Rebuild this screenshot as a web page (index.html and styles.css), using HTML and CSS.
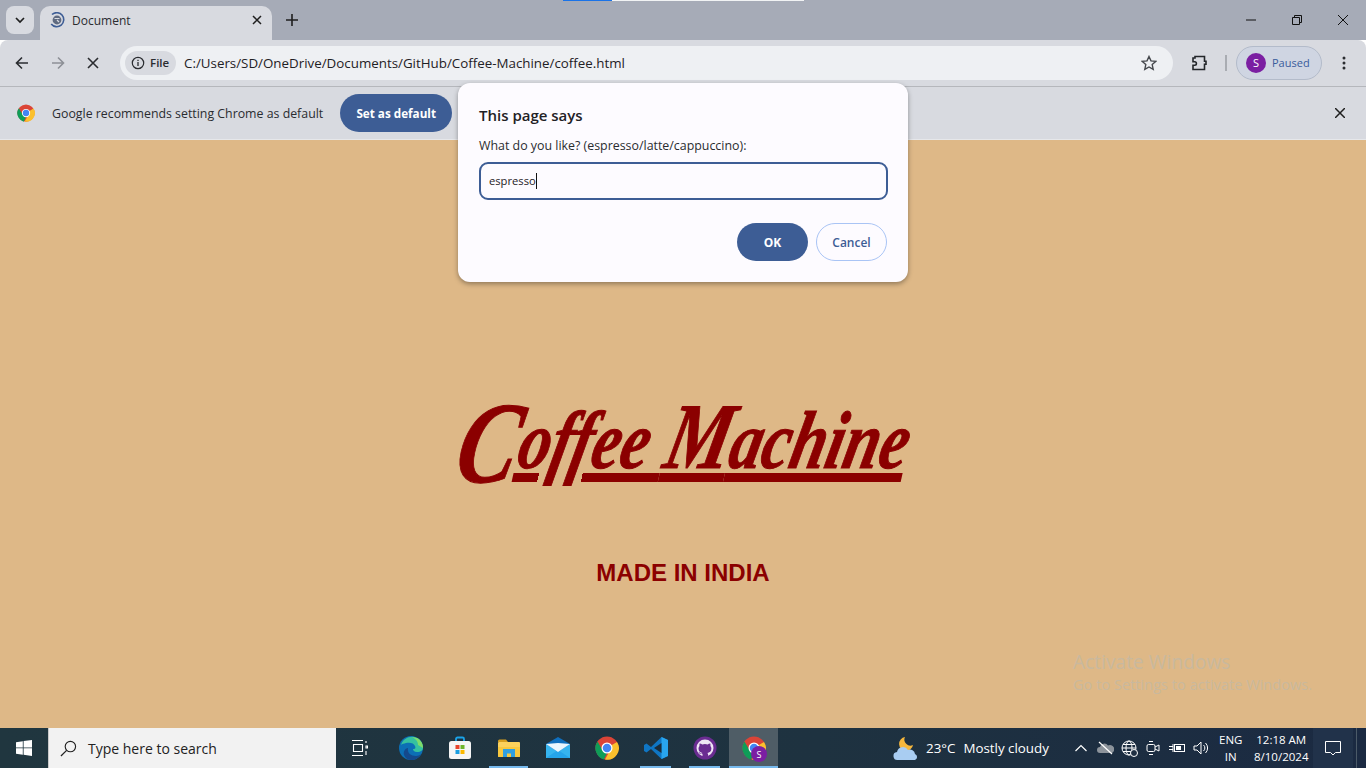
FILE: index.html

```html
<!DOCTYPE html>
<html>
  <head>
    <meta charset="utf-8">
    <title>Document</title>
    <link rel="stylesheet" href="styles.css">
  </head>
  <body>
    <div class="screen">
      <!-- tab strip -->
      <div class="tabstrip">
        <div class="load-line"><span class="load-blue"></span><span class="load-white"></span></div>
        <button class="tab-search">
          <svg width="12" height="12" viewBox="0 0 12 12"><path d="M2 4l4 4 4-4" fill="none" stroke="#1f1f1f" stroke-width="1.7"/></svg>
        </button>
        <div class="tab">
          <svg class="tab-favicon" width="16" height="16" viewBox="0 0 16 16">
            <path d="M3 2.5A7 7 0 1 1 2.2 12" fill="none" stroke="#3d5d95" stroke-width="1.6"/>
            <circle cx="8" cy="8" r="4.4" fill="#5f6a80"/>
            <path d="M5.5 6.5h5M8 8l2 2" stroke="#d8dae0" stroke-width="1.2"/>
          </svg>
          <span class="tab-title">Document</span>
          <svg class="tab-close" width="10" height="10" viewBox="0 0 10 10"><path d="M1 1l8 8M9 1l-8 8" stroke="#1f1f1f" stroke-width="1.5"/></svg>
        </div>
        <svg class="new-tab" width="12" height="12" viewBox="0 0 12 12"><path d="M6 0v12M0 6h12" stroke="#1f1f1f" stroke-width="1.6"/></svg>
        <div class="window-btns">
          <svg width="10" height="10" viewBox="0 0 10 10"><path d="M0 5h10" stroke="#111" stroke-width="1"/></svg>
          <svg width="10" height="10" viewBox="0 0 10 10"><path d="M.5 2.5h7v7h-7zM2.5 2.5v-2h7v7h-2" fill="none" stroke="#111" stroke-width="1"/></svg>
          <svg width="10" height="10" viewBox="0 0 10 10"><path d="M0 0l10 10M10 0L0 10" stroke="#111" stroke-width="1"/></svg>
        </div>
      </div>

      <!-- toolbar -->
      <div class="toolbar">
        <svg class="nav-icon" width="14" height="14" viewBox="0 0 14 14"><path d="M13 7H2M7 1.500L1.500 7 7 12.500" fill="none" stroke="#2a2c30" stroke-width="1.600"/></svg>
        <svg class="nav-icon" width="14" height="14" viewBox="0 0 14 14"><path d="M1 7h11M7 1.500L12.500 7 7 12.500" fill="none" stroke="#8d9096" stroke-width="1.600"/></svg>
        <svg class="nav-icon" width="12" height="12" viewBox="0 0 12 12"><path d="M1 1l10 10M11 1L1 11" stroke="#2a2c30" stroke-width="1.600"/></svg>
        <div class="omnibox">
          <div class="chip">
            <svg width="14" height="14" viewBox="0 0 14 14"><circle cx="7" cy="7" r="5.700" fill="none" stroke="#2a2c30" stroke-width="1.200"/><path d="M7 6v4M7 3.700v1.300" stroke="#2a2c30" stroke-width="1.300"/></svg>
            <span>File</span>
          </div>
          <span class="url">C:/Users/SD/OneDrive/Documents/GitHub/Coffee-Machine/coffee.html</span>
          <svg class="star" width="16" height="16" viewBox="0 0 16 16"><path d="M8 1.500l2 4.400 4.700.5-3.500 3.200 1 4.700L8 12l-4.200 2.300 1-4.700L1.300 6.400 6 5.900z" fill="none" stroke="#44474c" stroke-width="1.400"/></svg>
        </div>
        <svg class="puzzle" width="18" height="18" viewBox="0 0 18 18"><path d="M5 2.500h9.500v4.800h1.500v3h-1.500v5.200H3v-4.300h1.700a1.700 1.700 0 0 0 0-3.400H3V4h2z" fill="none" stroke="#23262a" stroke-width="1.600"/></svg>
        <span class="tool-sep"></span>
        <div class="profile">
          <span class="avatar">S</span>
          <span class="paused">Paused</span>
        </div>
        <svg class="menu-dots" width="4" height="14" viewBox="0 0 4 14"><circle cx="2" cy="2" r="1.500" fill="#2a2c30"/><circle cx="2" cy="7" r="1.500" fill="#2a2c30"/><circle cx="2" cy="12" r="1.500" fill="#2a2c30"/></svg>
      </div>

      <!-- default browser bar -->
      <div class="infobar">
        <svg class="chrome-logo" width="18" height="18" viewBox="0 0 48 48">
          <circle cx="24" cy="24" r="23" fill="#db4437"/>
          <path d="M4 36A23 23 0 0 1 5 11l11 19 8 4-6 13A23 23 0 0 1 4 36z" fill="#0f9d58"/>
          <path d="M44 12a23 23 0 0 1-24 35l10-18 2-10z" fill="#fbc02d"/>
          <circle cx="24" cy="24" r="11" fill="#fff"/>
          <circle cx="24" cy="24" r="8.500" fill="#4285f4"/>
        </svg>
        <span class="info-text">Google recommends setting Chrome as default</span>
        <button class="set-default">Set as default</button>
        <svg class="info-close" width="10" height="10" viewBox="0 0 10 10"><path d="M0 0l10 10M10 0L0 10" stroke="#1f1f1f" stroke-width="1.500"/></svg>
      </div>

      <!-- page -->
      <main class="page">
        <h1 class="logo"><span class="logo-c">C</span><span class="logo-line">offee <span class="logo-m">M</span>achine</span></h1>
        <h2 class="made">MADE IN INDIA</h2>
        <div class="activate">
          <div class="activate-big">Activate Windows</div>
          <div class="activate-small">Go to Settings to activate Windows.</div>
        </div>
      </main>

      <!-- taskbar -->
      <footer class="taskbar">
        <div class="start">
          <svg width="16" height="16" viewBox="0 0 16 16"><path d="M0 2.200l6.800-1v6.300H0zM7.600 1.100L16 0v7.500H7.600zM0 8.300h6.800v6.400L0 13.800zM7.600 8.300H16V16l-8.400-1.200z" fill="#fff"/></svg>
        </div>
        <div class="search">
          <svg width="17" height="17" viewBox="0 0 18 18"><circle cx="11" cy="7" r="5.500" fill="none" stroke="#222" stroke-width="1.200"/><path d="M7 11l-6 6" stroke="#222" stroke-width="1.300"/></svg>
          <span>Type here to search</span>
        </div>
        <div class="task-icons">
          <div class="task-item task-view">
            <svg width="16" height="16" viewBox="0 0 16 16"><path d="M0 .5h11M0 15.500h11M1.500 4.500h9v7h-9zM14 1v2M14 6h1.500v2H14zM14 11v4" fill="none" stroke="#fff" stroke-width="1.100"/></svg>
          </div>
          <div class="task-item">
            <svg width="24" height="24" viewBox="0 0 24 24">
              <circle cx="12" cy="12" r="12" fill="#0c6fb5"/>
              <path d="M2 9C4 2 12-1 18 2c4 2 6 6 6 10 0 2-2 4-6 4-3 0-4-2-4-3 2 0 3-1 2-3-1-3-5-4-9-3-2 .5-4 1-5 2z" fill="#35c1a0"/>
              <path d="M18 2c4 2 6 6 6 10l-5-3c0-3-1-5-6-8z" fill="#7fdc6a"/>
              <path d="M9 12c-1 5 3 8 8 8 2 0 4-1 5-2-2 4-6 6-10 6-3 0-6-2-7-5s1-7 4-7z" fill="#14498c"/>
            </svg>
          </div>
          <div class="task-item">
            <svg width="24" height="24" viewBox="0 0 24 24">
              <path d="M8 6V3a1.500 1.500 0 0 1 1.500-1.500h5A1.500 1.500 0 0 1 16 3v3" fill="none" stroke="#1aa3e8" stroke-width="1.800"/>
              <rect x="1" y="5" width="22" height="18" rx="2.500" fill="#f5f5f5"/>
              <rect x="7.500" y="9" width="4" height="4" fill="#e8432a"/>
              <rect x="12.500" y="9" width="4" height="4" fill="#6fb52c"/>
              <rect x="7.500" y="14" width="4" height="4" fill="#1a9de0"/>
              <rect x="12.500" y="14" width="4" height="4" fill="#fcb900"/>
            </svg>
          </div>
          <div class="task-item is-open">
            <svg width="24" height="24" viewBox="0 0 24 24">
              <path d="M1 5a1.500 1.500 0 0 1 1.500-1.500H9l2 2.500H1z" fill="#d79f1e"/>
              <rect x="1" y="6" width="22" height="15" rx="1" fill="#fbd15c"/>
              <path d="M1 11h22v9a1 1 0 0 1-1 1H2a1 1 0 0 1-1-1z" fill="#f8c83e"/>
              <path d="M6 21v-8h12v8h-4v-3.500h-4V21z" fill="#2f9fe0"/>
            </svg>
          </div>
          <div class="task-item">
            <svg width="24" height="24" viewBox="0 0 24 24">
              <path d="M0 8L12 1l12 7v14H0z" fill="#0f6fbe"/>
              <path d="M0 8l12 8 12-8v14H0z" fill="#36b4ef"/>
              <path d="M0 22l12-8 12 8z" fill="#22a0e8" opacity=".8"/>
              <path d="M0 8l12 8 12-8-12-1z" fill="#eaf6fd"/>
            </svg>
          </div>
          <div class="task-item">
            <svg width="24" height="24" viewBox="0 0 48 48">
              <circle cx="24" cy="24" r="23" fill="#db4437"/>
              <path d="M4 36A23 23 0 0 1 5 11l11 19 8 4-6 13A23 23 0 0 1 4 36z" fill="#0f9d58"/>
              <path d="M44 12a23 23 0 0 1-24 35l10-18 2-10z" fill="#fbc02d"/>
              <circle cx="24" cy="24" r="11" fill="#fff"/>
              <circle cx="24" cy="24" r="8.500" fill="#4285f4"/>
            </svg>
          </div>
          <div class="task-item is-open is-short">
            <svg width="24" height="24" viewBox="0 0 24 24">
              <path d="M17.500 1L24 4v16l-6.500 3L7 13l-4.500 3.500L0 15V9l2.500-1.500L7 11z" fill="#0f76c4"/>
              <path d="M17.500 1L24 4v16l-6.500 3z" fill="#29a5ee"/>
              <path d="M17.500 7v10L10 12z" fill="#1a2c3a"/>
            </svg>
          </div>
          <div class="task-item is-open is-short">
            <svg width="24" height="24" viewBox="0 0 24 24">
              <circle cx="12" cy="12" r="11.500" fill="#6a2c91"/>
              <circle cx="12" cy="12" r="8.500" fill="#efe6f5"/>
              <path d="M9.500 21v-3c-3 .5-3.500-1-4-2 1 0 1.500 1 2 1.500 1 .5 1.500 0 2-.5-2-.5-4-1.500-4-4.500 0-1 .3-1.800 1-2.500-.2-.8-.2-1.700.2-2.500 1 0 1.800.5 2.500 1a8 8 0 0 1 5.500 0c.7-.5 1.500-1 2.500-1 .4.800.4 1.700.2 2.500.7.700 1 1.500 1 2.500 0 3-2 4-4 4.500.5.500.7 1 .7 2v3z" fill="#6a2c91"/>
            </svg>
          </div>
          <div class="task-item is-active">
            <svg width="24" height="24" viewBox="0 0 48 48">
              <circle cx="24" cy="24" r="23" fill="#db4437"/>
              <path d="M4 36A23 23 0 0 1 5 11l11 19 8 4-6 13A23 23 0 0 1 4 36z" fill="#0f9d58"/>
              <path d="M44 12a23 23 0 0 1-24 35l10-18 2-10z" fill="#fbc02d"/>
              <circle cx="24" cy="24" r="11" fill="#fff"/>
              <circle cx="24" cy="24" r="8.500" fill="#4285f4"/>
            </svg>
            <span class="task-badge">S</span>
          </div>
        </div>
        <div class="weather">
          <svg width="26" height="26" viewBox="0 0 26 26">
            <path d="M12 2a7 7 0 1 0 8 8 6 6 0 0 1-8-8z" fill="#f6b73c"/>
            <path d="M5 25a4 4 0 0 1-1-8 6 6 0 0 1 11-2 5 5 0 0 1 7 4 3.200 3.200 0 0 1 0 6z" fill="#a9cdf2"/>
          </svg>
          <span class="temp">23°C</span>
          <span class="sky">Mostly cloudy</span>
        </div>
        <div class="tray">
          <svg width="12" height="8" viewBox="0 0 12 8"><path d="M.5 7L6 1.500 11.500 7" fill="none" stroke="#fff" stroke-width="1.200"/></svg>
          <svg width="17" height="14" viewBox="0 0 17 14"><path d="M3 12a3 3 0 0 1 0-6 4.500 4.500 0 0 1 8-1.500A3.500 3.500 0 0 1 15 12z" fill="#8c939b"/><path d="M2 1l13 12" stroke="#fff" stroke-width="1.200"/></svg>
          <svg width="17" height="17" viewBox="0 0 17 17"><circle cx="8" cy="8" r="7" fill="none" stroke="#fff" stroke-width="1"/><ellipse cx="8" cy="8" rx="3" ry="7" fill="none" stroke="#fff" stroke-width="1"/><path d="M1 8h14M2 4.500h12M2 11.500h12" stroke="#fff" stroke-width="1"/><circle cx="13" cy="13" r="3.500" fill="#1f2f42" stroke="#fff"/></svg>
          <svg width="14" height="16" viewBox="0 0 14 16"><rect x="1" y="4.500" width="8" height="7" rx="1.500" fill="none" stroke="#fff"/><path d="M9 7l4-2v6l-4-2M3 1.500h4M3 14.500h4" fill="none" stroke="#fff"/></svg>
          <svg width="16" height="12" viewBox="0 0 16 12"><rect x="5.500" y="2.500" width="10" height="7" fill="none" stroke="#fff"/><rect x="7" y="4" width="5" height="4" fill="#fff"/><path d="M0 4.500h4M0 7.500h4M4 2v8" stroke="#fff"/></svg>
          <svg width="17" height="14" viewBox="0 0 17 14"><path d="M1 5h3l4-4v12L4 9H1zM10.500 4a4 4 0 0 1 0 6M12.500 2a7 7 0 0 1 0 10" fill="none" stroke="#fff"/></svg>
        </div>
        <div class="lang"><span>ENG</span><span>IN</span></div>
        <div class="clock"><span>12:18 AM</span><span>8/10/2024</span></div>
        <div class="notify">
          <svg width="16" height="16" viewBox="0 0 16 16"><path d="M.5 1.500h15v11h-5L8 15l-2.500-2.500h-5z" fill="none" stroke="#fff" stroke-width="1"/></svg>
        </div>
        <div class="show-desktop"></div>
      </footer>

      <!-- prompt dialog, sits over the infobar and page -->
      <div class="dialog">
        <div class="dialog-title">This page says</div>
        <div class="dialog-msg">What do you like? (espresso/latte/cappuccino):</div>
        <div class="dialog-input"><span>espresso</span><i class="caret"></i></div>
        <div class="dialog-btns">
          <button class="btn-ok">OK</button>
          <button class="btn-cancel">Cancel</button>
        </div>
      </div>
    </div>
  </body>
</html>
```

FILE: styles.css

```css
* {
  box-sizing: border-box;
}

html,
body {
  margin: 0;
  height: 100%;
  overflow: hidden;
}

body {
  font-family: "Open Sans", "Noto Sans", sans-serif;
}

button {
  font-family: inherit;
  border: none;
  padding: 0;
}

.screen {
  position: relative;
  display: flex;
  flex-direction: column;
  width: 1366px;
  height: 768px;
}

/* tab strip */
.tabstrip {
  position: relative;
  display: flex;
  align-items: flex-end;
  flex: none;
  height: 40px;
  background: #a6abb7;
}

.load-line {
  position: absolute;
  top: 0;
  left: 563px;
  display: flex;
  height: 1px;
}

.load-blue {
  width: 49px;
  background: #1a73e8;
}

.load-white {
  width: 192px;
  background: #f1f3f4;
}

.tab-search {
  display: flex;
  align-items: center;
  justify-content: center;
  align-self: flex-start;
  width: 28px;
  height: 28px;
  margin: 6px 0 0 6px;
  border-radius: 8px;
  background: #d8dae0;
}

.tab {
  display: flex;
  align-items: center;
  width: 232px;
  height: 34px;
  margin-left: 6px;
  padding: 0 10px 6px 9px;
  border-radius: 10px 10px 0 0;
  background: #d8dae0;
}

.tab-favicon {
  flex: none;
  margin-right: 7px;
}

.tab-title {
  flex: 1;
  font-size: 12px;
  color: #2a2c30;
}

.tab-close {
  flex: none;
  margin-bottom: 1px;
}

.new-tab {
  align-self: flex-start;
  margin: 14px 0 0 14px;
}

.window-btns {
  display: flex;
  gap: 36px;
  align-self: flex-start;
  margin: 15px 18px 0 auto;
}

/* toolbar */
.toolbar {
  display: flex;
  align-items: center;
  flex: none;
  height: 47px;
  padding: 0 0 1px 15px;
  border-bottom: 1px solid #b5b7bc;
  background: #d8dae0;
  border-radius: 8px 8px 0 0;
}

.nav-icon {
  flex: none;
  margin-right: 22px;
}

.nav-icon:nth-child(3) {
  margin-right: 21px;
}

.omnibox {
  display: flex;
  align-items: center;
  flex: none;
  width: 1053px;
  height: 34px;
  padding: 0 16px 0 5px;
  border-radius: 17px;
  background: #eef0f3;
}

.chip {
  display: flex;
  align-items: center;
  flex: none;
  gap: 5px;
  width: 51px;
  height: 24px;
  padding-left: 6px;
  border-radius: 12px;
  background: #d8dae0;
  font-size: 11.500px;
  font-weight: 600;
  color: #2a2c30;
}

.url {
  flex: 1;
  margin-left: 8px;
  padding-top: 1px;
  font-size: 13.350px;
  color: #1f2125;
}

.star {
  flex: none;
}

.puzzle {
  flex: none;
  margin-left: 17px;
}

.tool-sep {
  flex: none;
  width: 2px;
  height: 16px;
  margin-left: 17px;
  background: #a9acb2;
}

.profile {
  display: flex;
  align-items: center;
  flex: none;
  gap: 6px;
  width: 86px;
  height: 34px;
  margin-left: 9px;
  padding-left: 9px;
  border: 1px solid #b3bbca;
  border-radius: 17px;
  background: #cfd5e2;
}

.avatar {
  display: flex;
  align-items: center;
  justify-content: center;
  width: 20px;
  height: 20px;
  border-radius: 50%;
  background: #7b1fa2;
  font-size: 11px;
  color: #fff;
}

.paused {
  font-size: 11px;
  color: #3a5c9c;
}

.menu-dots {
  flex: none;
  margin-left: 20px;
}

/* infobar */
.infobar {
  display: flex;
  align-items: center;
  flex: none;
  height: 53px;
  padding-left: 17px;
  border-bottom: 1px solid #e6e7ea;
  background: #d8dae0;
}

.chrome-logo {
  flex: none;
}

.info-text {
  margin-left: 17px;
  font-size: 12.350px;
  color: #2a2c30;
}

.set-default {
  width: 112px;
  height: 38px;
  margin-left: 17px;
  border-radius: 19px;
  background: #3d5d95;
  font-size: 11.700px;
  font-weight: 700;
  color: #fff;
}

.info-close {
  flex: none;
  margin-left: auto;
  margin-right: 21px;
}

/* page */
.page {
  position: relative;
  display: flex;
  flex-direction: column;
  align-items: center;
  flex: 1;
  background: #deb887;
}

/* no script font here, so a squeezed and slanted serif stands in for it */
.logo {
  margin: 255px 0 0;
  font-family: "Liberation Serif", serif;
  font-size: 82px;
  line-height: 92px;
  font-style: italic;
  font-weight: 700;
  color: #8b0000;
  white-space: nowrap;
  -webkit-text-stroke: 1px #8b0000;
  transform: translateX(2px) scaleX(.78) skewX(-16deg);
}

.logo-line {
  text-decoration: underline;
  text-decoration-thickness: 9px;
  text-underline-offset: 5px;
}

.logo-c {
  font-size: 116px;
  line-height: 0;
  vertical-align: -14px;
}

.logo-m {
  font-size: 94px;
  line-height: 0;
}

.made {
  margin: 72px 0 0;
  font-family: "Liberation Sans", Arial, sans-serif;
  font-size: 24px;
  line-height: 28px;
  font-weight: 700;
  color: #8b0000;
}

.activate {
  position: absolute;
  top: 510px;
  left: 1073px;
  color: #c9b89e;
}

.activate-big {
  font-size: 19.200px;
  line-height: 24px;
}

.activate-small {
  margin-top: 1px;
  font-size: 14.600px;
  line-height: 18px;
}

/* taskbar */
.taskbar {
  display: flex;
  align-items: center;
  flex: none;
  height: 40px;
  background: linear-gradient(90deg, #20363f 0%, #1e3240 60%, #1b2a42 100%);
  color: #fff;
}

.start {
  display: flex;
  align-items: center;
  justify-content: center;
  flex: none;
  width: 48px;
  height: 40px;
}

.search {
  display: flex;
  align-items: center;
  flex: none;
  gap: 11px;
  width: 288px;
  height: 40px;
  padding-left: 11px;
  background: #f2f2f2;
  border-left: 1px solid #c9c9c9;
  font-size: 14px;
  color: #222;
}

.task-icons {
  display: flex;
  flex: none;
  margin-left: 1px;
}

.task-item {
  position: relative;
  display: flex;
  align-items: center;
  justify-content: center;
  width: 49px;
  height: 40px;
}

.task-view svg {
  margin-right: 3px;
}

.is-open::after {
  content: "";
  position: absolute;
  left: 5px;
  right: 5px;
  bottom: 0;
  height: 2px;
  background: #76b9ed;
}

.is-short::after {
  left: 9px;
  right: 9px;
}

.is-active {
  background: #4f5d66;
}

.is-active::after {
  content: "";
  position: absolute;
  left: 0;
  right: 0;
  bottom: 0;
  height: 2px;
  background: #76b9ed;
}

.task-badge {
  position: absolute;
  top: 18px;
  left: 22px;
  display: flex;
  align-items: center;
  justify-content: center;
  width: 16px;
  height: 16px;
  border-radius: 50%;
  background: #7b1fa2;
  font-size: 9px;
}

.weather {
  display: flex;
  align-items: center;
  flex: none;
  gap: 9px;
  margin-left: 113px;
  font-size: 13.350px;
  white-space: nowrap;
}

.weather svg {
  margin-left: 2px;
  margin-right: -2px;
}

.weather .sky {
  margin-left: -1px;
}

.tray {
  display: grid;
  grid-template-columns: repeat(6, 24px);
  justify-items: center;
  align-items: center;
  flex: none;
  position: absolute;
  left: 1069px;
}

.lang,
.clock {
  display: flex;
  flex-direction: column;
  align-items: center;
  flex: none;
  position: absolute;
  font-size: 11.500px;
  line-height: 17px;
}

.lang {
  left: 1219px;
}

.clock {
  left: 1254px;
}

.notify {
  display: flex;
  align-items: center;
  justify-content: center;
  flex: none;
  position: absolute;
  left: 1313px;
  width: 40px;
  height: 40px;
  background: #21324a;
}

.show-desktop {
  flex: none;
  position: absolute;
  left: 1356px;
  width: 10px;
  height: 40px;
  border-left: 1px solid #4b5a68;
}

/* prompt dialog */
.dialog {
  position: absolute;
  top: 83px;
  left: 458px;
  width: 450px;
  height: 199px;
  padding: 21px 21px 0;
  border-radius: 12px;
  background: #fdfbff;
  box-shadow: 0 2px 5px rgba(0, 0, 0, .35);
}

.dialog-title {
  font-size: 15px;
  line-height: 22px;
  font-weight: 600;
  color: #1f2125;
}

.dialog-msg {
  margin-top: 11px;
  font-size: 12.400px;
  line-height: 18px;
  color: #2a2c30;
}

.dialog-input {
  display: flex;
  align-items: center;
  width: 409px;
  height: 38px;
  margin-top: 7px;
  padding: 0 0 1px 8px;
  border: 2px solid #3d5d95;
  border-radius: 9px;
  font-size: 11.200px;
  color: #1f2125;
}

.caret {
  width: 1px;
  height: 16px;
  background: #111;
}

.dialog-btns {
  display: flex;
  justify-content: flex-end;
  gap: 8px;
  width: 408px;
  margin-top: 23px;
}

.btn-ok,
.btn-cancel {
  width: 71px;
  height: 38px;
  border-radius: 19px;
  font-size: 12px;
}

.btn-ok {
  background: #3d5d95;
  font-weight: 700;
  color: #fff;
}

.btn-cancel {
  border: 1px solid #a9c4f5;
  background: #fdfbff;
  font-weight: 600;
  color: #3d5d95;
}
```
